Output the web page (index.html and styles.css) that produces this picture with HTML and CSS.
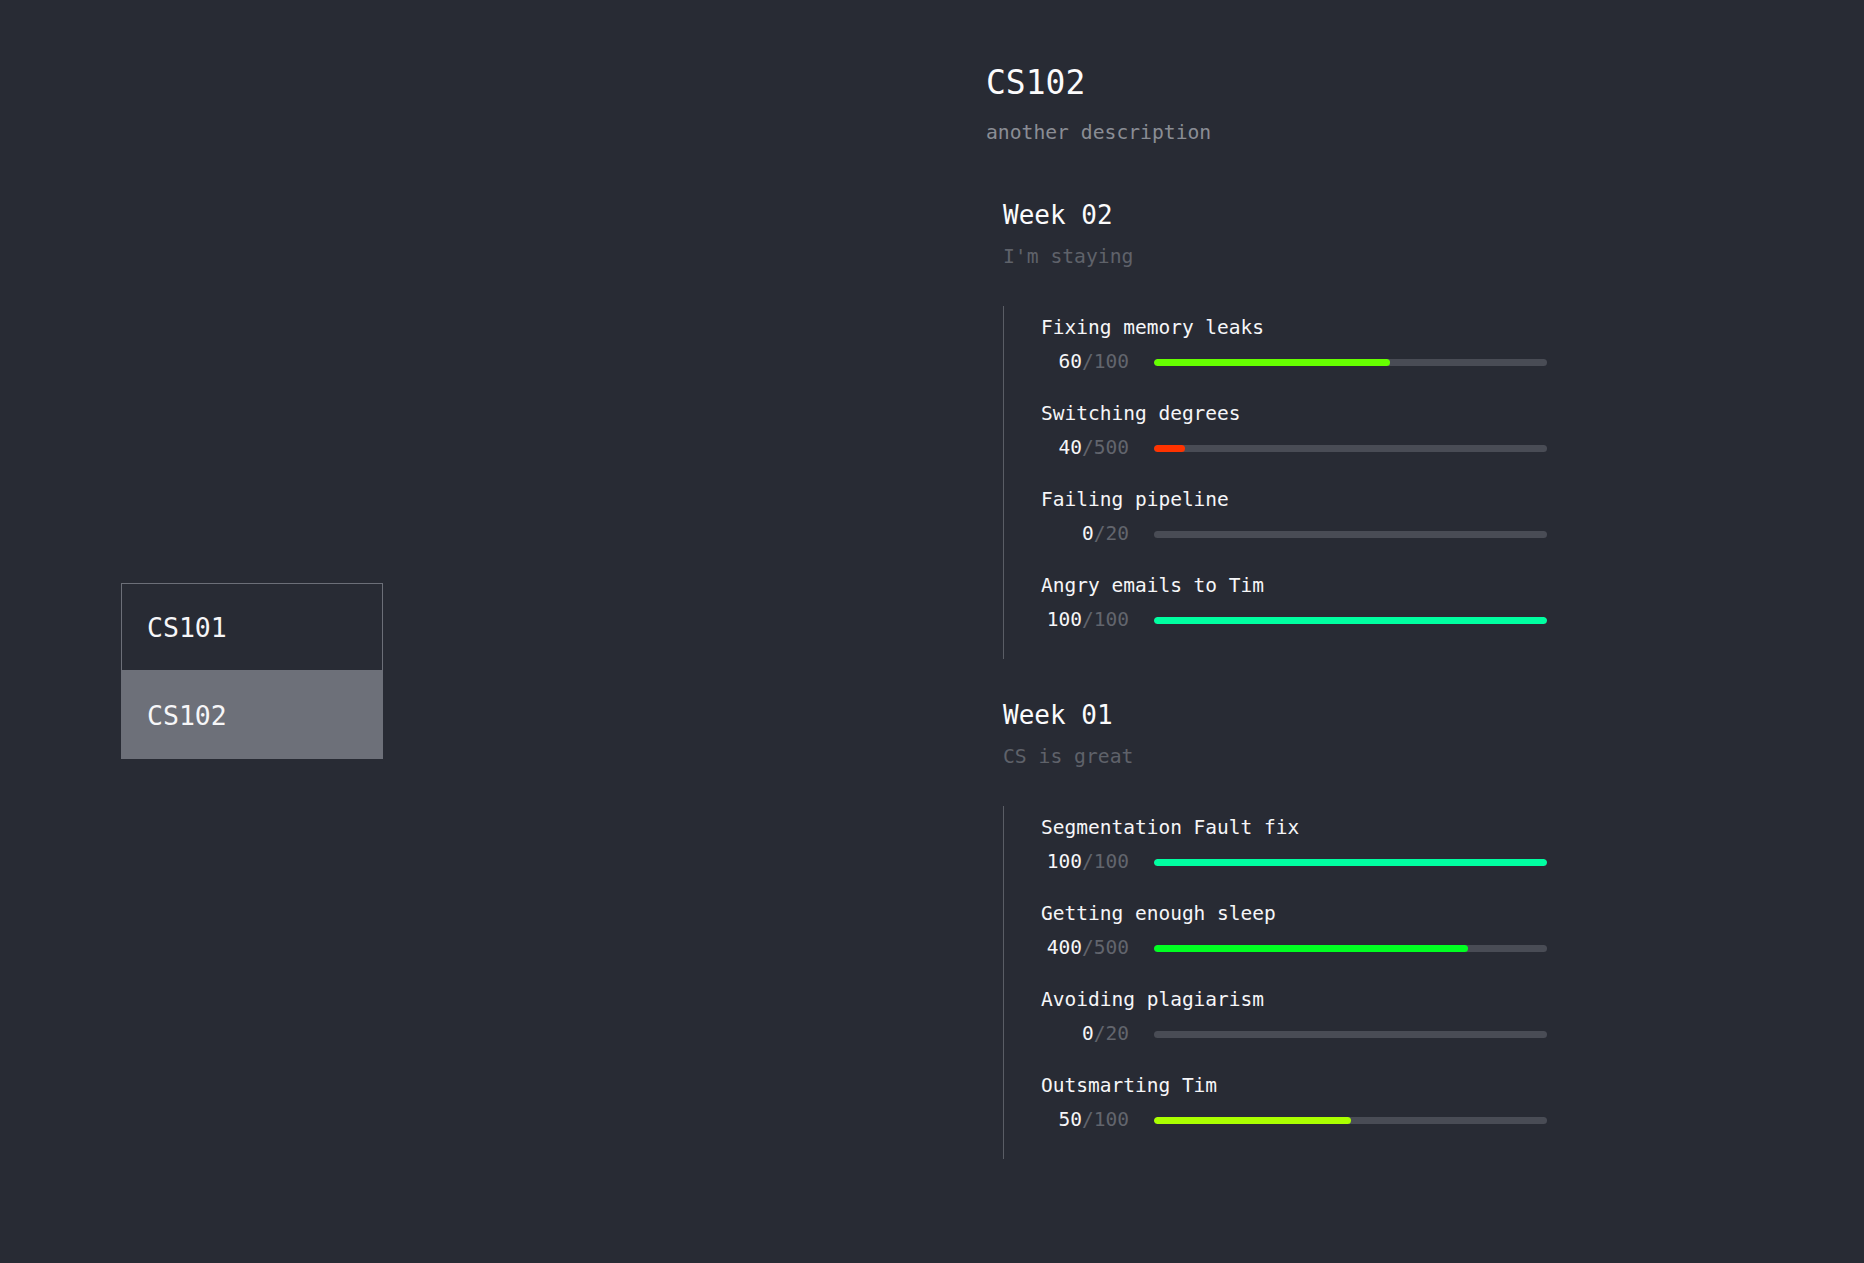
FILE: index.html
```html
<!DOCTYPE html>
<html lang="en">
<head>
<meta charset="utf-8">
<title>Courses</title>
<link rel="stylesheet" href="styles.css">
</head>
<body>
<div class="page">
  <nav class="courses">
    <div class="course">CS101</div>
    <div class="course selected">CS102</div>
  </nav>
  <main class="detail">
    <h1 class="title">CS102</h1>
    <p class="desc">another description</p>

    <section class="week">
      <h2 class="week-title">Week 02</h2>
      <p class="week-desc">I'm staying</p>
      <div class="tasks">
        <div class="task">
          <div class="task-name">Fixing memory leaks</div>
          <div class="task-row">
            <span class="count"><span class="done">60</span><span class="total">/100</span></span>
            <div class="track"><div class="fill" style="width:60%;background:hsl(96,100%,50%)"></div></div>
          </div>
        </div>
        <div class="task">
          <div class="task-name">Switching degrees</div>
          <div class="task-row">
            <span class="count"><span class="done">40</span><span class="total">/500</span></span>
            <div class="track"><div class="fill" style="width:8%;background:hsl(12,100%,50%)"></div></div>
          </div>
        </div>
        <div class="task">
          <div class="task-name">Failing pipeline</div>
          <div class="task-row">
            <span class="count"><span class="done">0</span><span class="total">/20</span></span>
            <div class="track"><div class="fill" style="width:0%"></div></div>
          </div>
        </div>
        <div class="task">
          <div class="task-name">Angry emails to Tim</div>
          <div class="task-row">
            <span class="count"><span class="done">100</span><span class="total">/100</span></span>
            <div class="track"><div class="fill" style="width:100%;background:hsl(158,100%,50%)"></div></div>
          </div>
        </div>
      </div>
    </section>

    <section class="week">
      <h2 class="week-title">Week 01</h2>
      <p class="week-desc">CS is great</p>
      <div class="tasks">
        <div class="task">
          <div class="task-name">Segmentation Fault fix</div>
          <div class="task-row">
            <span class="count"><span class="done">100</span><span class="total">/100</span></span>
            <div class="track"><div class="fill" style="width:100%;background:hsl(158,100%,50%)"></div></div>
          </div>
        </div>
        <div class="task">
          <div class="task-name">Getting enough sleep</div>
          <div class="task-row">
            <span class="count"><span class="done">400</span><span class="total">/500</span></span>
            <div class="track"><div class="fill" style="width:80%;background:hsl(128,100%,50%)"></div></div>
          </div>
        </div>
        <div class="task">
          <div class="task-name">Avoiding plagiarism</div>
          <div class="task-row">
            <span class="count"><span class="done">0</span><span class="total">/20</span></span>
            <div class="track"><div class="fill" style="width:0%"></div></div>
          </div>
        </div>
        <div class="task">
          <div class="task-name">Outsmarting Tim</div>
          <div class="task-row">
            <span class="count"><span class="done">50</span><span class="total">/100</span></span>
            <div class="track"><div class="fill" style="width:50%;background:hsl(80,100%,50%)"></div></div>
          </div>
        </div>
      </div>
    </section>
  </main>
</div>
</body>
</html>
```

FILE: styles.css
```css
* { box-sizing: border-box; }

html, body {
  margin: 0;
  padding: 0;
  background: #282b34;
  color: #f4f4f6;
  font-family: "DejaVu Sans Mono", "Liberation Mono", monospace;
}

body { height: 1263px; overflow: hidden; }

.page {
  display: flex;
  align-items: flex-start;
  padding-left: 121px;
}

/* Sidebar */
.courses {
  width: 262px;
  margin-top: 583px;
  flex: none;
}

.course {
  height: 87px;
  display: flex;
  align-items: center;
  padding-left: 25px;
  font-size: 26.5px;
  color: #f6f6f8;
  border: 1px solid #6c6f78;
  border-bottom: none;
}

.course.selected {
  height: 89px;
  background: #6d7079;
  border-color: #6d7079;
}

/* Detail */
.detail {
  margin-left: 603px;
  padding-top: 63px;
  width: 620px;
}

.title {
  margin: 0;
  font-size: 33px;
  line-height: 40px;
  font-weight: normal;
  color: #fbfbfc;
}

.desc {
  margin: 16px 0 0;
  font-size: 19.7px;
  line-height: 28px;
  color: #8a8d94;
}

.week {
  margin-left: 17px;
  margin-top: 52px;
}

.week + .week { margin-top: 40px; }

.week-title {
  margin: 0;
  font-size: 26px;
  line-height: 32px;
  font-weight: normal;
  color: #fbfbfc;
}

.week-desc {
  margin: 12px 0 0;
  font-size: 19.7px;
  line-height: 28px;
  color: #5f626a;
}

.tasks {
  margin-top: 35px;
  border-left: 1px solid #5a5d65;
  padding: 10px 0 27px 37px;
  display: flex;
  flex-direction: column;
  gap: 28px;
}

.task-name {
  font-size: 19.5px;
  line-height: 24px;
  color: #f6f6f8;
}

.task-row {
  margin-top: 10px;
  display: flex;
  align-items: center;
  gap: 25px;
  font-size: 19.5px;
  line-height: 24px;
}

.count {
  width: 88px;
  text-align: right;
  flex: none;
}

.done { color: #f6f6f8; }
.total { color: #62656d; }

.track {
  width: 393px;
  height: 7px;
  border-radius: 4px;
  background: #494c55;
  overflow: hidden;
}

.fill {
  height: 100%;
  border-radius: 4px;
}
```
